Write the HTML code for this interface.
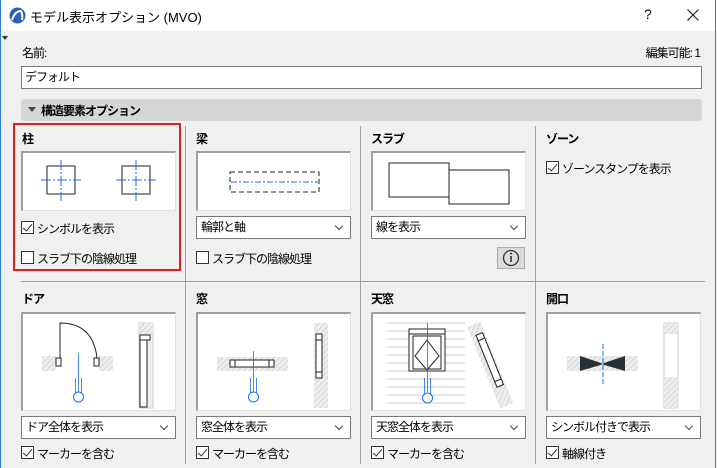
<!DOCTYPE html><html><head><meta charset="utf-8"><style>
*{box-sizing:border-box;margin:0;padding:0}
body{width:717px;height:468px;overflow:hidden;background:#f0f0f0;font-family:"Liberation Sans","Noto Sans CJK JP",sans-serif;font-size:12px;color:#000;position:relative;letter-spacing:-1px}
.a{position:absolute}
.tb{left:0;top:0;width:717px;height:31px;background:#fff}
.bd{border-left:1px solid #2b7fd8;border-right:1px solid #2b7fd8;left:0;top:0;width:716px;height:468px;pointer-events:none}
.inp{background:#fff;border:1px solid #7a7a7a}
.pv{background:#fff;border-top:2px solid #a0a0a0;border-left:2px solid #a0a0a0;border-right:1px solid #e3e3e3;border-bottom:1px solid #e3e3e3}
.dd{background:#fff;border:1px solid #7a7a7a;height:23px;padding-left:4px;line-height:21px;font-size:12px}
.dd:after{content:"";position:absolute;right:8px;top:6px;width:5px;height:5px;border-right:1px solid #444;border-bottom:1px solid #444;transform:rotate(45deg)}
.cb{width:13px;height:13px;border:1px solid #333;background:#fff}
.cb.on:after{content:"";position:absolute;left:3px;top:0px;width:4px;height:8px;border-right:1.5px solid #333;border-bottom:1.5px solid #333;transform:rotate(40deg)}
.t{font-weight:bold;font-size:12px}
.vl{width:1px;background:#a0a0a0}
</style></head><body>
<div class="a tb"></div>
<svg class="a" style="left:9px;top:7px" width="17" height="17"><circle cx="8.5" cy="8.5" r="8" fill="#2a62b8"/><path d="M3 13 Q6 4 12 4 Q14 8 13 13" stroke="#fff" stroke-width="2" fill="none"/></svg>
<div class="a" style="left:30px;top:7px;font-size:13px;letter-spacing:0">モデル表示オプション (MVO)</div>
<div class="a" style="left:644px;top:6px;font-size:14px">?</div>
<svg class="a" style="left:687px;top:9px" width="12" height="12"><path d="M0.5 0.5L11.5 11.5M11.5 0.5L0.5 11.5" stroke="#111" stroke-width="1"/></svg>
<div class="a" style="left:2px;top:36px;width:0;height:0;border-left:3px solid transparent;border-right:3px solid transparent;border-top:4px solid #333"></div>
<div class="a" style="left:22px;top:44px">名前:</div>
<div class="a" style="right:17px;top:44px">編集可能: 1</div>
<div class="a inp" style="left:21px;top:66px;width:681px;height:23px;padding-left:3px;line-height:21px">デフォルト</div>
<div class="a" style="left:21px;top:99px;width:681px;height:22px;background:#d6d6d6;border-radius:3px"></div>
<div class="a" style="left:28px;top:107px;border-left:4px solid transparent;border-right:4px solid transparent;border-top:5px solid #444"></div>
<div class="a t" style="left:41px;top:102px">構造要素オプション</div>
<div class="a vl" style="left:185px;top:126px;height:156px"></div>
<div class="a vl" style="left:360px;top:126px;height:156px"></div>
<div class="a vl" style="left:535px;top:126px;height:156px"></div>
<div class="a" style="left:21px;top:281px;width:684px;height:1px;background:#a0a0a0"></div>
<div class="a vl" style="left:185px;top:282px;height:182px"></div>
<div class="a vl" style="left:360px;top:282px;height:182px"></div>
<div class="a vl" style="left:535px;top:282px;height:182px"></div>
<div class="a" style="left:13px;top:123px;width:168px;height:148px;border:2px solid #e02020"></div>
<!-- row 1 -->
<div class="a t" style="left:22px;top:130px">柱</div>
<div class="a pv" style="left:21px;top:151px;width:155px;height:60px"><svg width="152" height="57"><g fill="none" stroke="#222"><rect x="24" y="13" width="28" height="28"/><rect x="99" y="13" width="28" height="28"/></g><g stroke="#1a6cf0" stroke-dasharray="10,2,2,2"><path d="M38 7V48M18 27H58M113 7V48M93 27H133"/></g></svg></div>
<div class="a cb on" style="left:21px;top:221px"></div><div class="a" style="left:37px;top:220px">シンボルを表示</div>
<div class="a cb" style="left:21px;top:251px"></div><div class="a" style="left:37px;top:250px">スラブ下の陰線処理</div>

<div class="a t" style="left:196px;top:130px">梁</div>
<div class="a pv" style="left:196px;top:151px;width:155px;height:60px"><svg width="152" height="57"><rect x="32" y="19" width="89" height="20" fill="none" stroke="#222" stroke-dasharray="5,3"/><path d="M33 29H120" stroke="#1a6cf0" stroke-dasharray="6,2,2,2"/></svg></div>
<div class="a dd" style="left:196px;top:216px;width:155px">輪郭と軸</div>
<div class="a cb" style="left:196px;top:251px"></div><div class="a" style="left:212px;top:250px">スラブ下の陰線処理</div>

<div class="a t" style="left:371px;top:130px">スラブ</div>
<div class="a pv" style="left:371px;top:151px;width:155px;height:60px"><svg width="152" height="57"><g fill="none" stroke="#222"><rect x="16" y="10" width="60" height="34"/><rect x="76" y="17" width="60" height="34"/></g></svg></div>
<div class="a dd" style="left:371px;top:216px;width:155px">線を表示</div>
<div class="a" style="left:497px;top:247px;width:28px;height:22px;background:#dcdcdc;border:1px solid #adadad"><svg width="26" height="20"><circle cx="13" cy="10" r="7.5" fill="none" stroke="#333" stroke-width="1.3"/><path d="M13 8V14" stroke="#333" stroke-width="1.6"/><circle cx="13" cy="5.5" r="1" fill="#333"/></svg></div>

<div class="a t" style="left:546px;top:130px">ゾーン</div>
<div class="a cb on" style="left:546px;top:161px"></div><div class="a" style="left:562px;top:160px">ゾーンスタンプを表示</div>
<!-- row 2 -->
<svg width="0" height="0" class="a"><defs><pattern id="h" width="4" height="4" patternUnits="userSpaceOnUse" patternTransform="rotate(45)"><rect width="4" height="4" fill="#eee"/><path d="M0 0V4" stroke="#ccc" stroke-width="1.5"/></pattern></defs></svg>
<div class="a t" style="left:22px;top:290px">ドア</div>
<div class="a pv" style="left:21px;top:312px;width:155px;height:99px"><svg width="152" height="96"><rect x="19" y="42" width="14" height="15" fill="url(#h)"/><rect x="76" y="42" width="14" height="15" fill="url(#h)"/><g fill="#fff" stroke="#222"><rect x="33" y="44" width="5" height="8"/><rect x="71" y="44" width="5" height="8"/></g><path d="M37 44V9Q70 9 74 44" fill="none" stroke="#222"/><path d="M55.5 39V78M52.5 64V80M58.5 64V80" stroke="#1a6cf0" stroke-width="0.8"/><circle cx="55.5" cy="83" r="5" fill="#fff" stroke="#1a6cf0"/><rect x="116" y="9" width="14" height="85" fill="#eee" stroke="#ccc"/><rect x="116" y="9" width="14" height="11" fill="url(#h)"/><g fill="#fff" stroke="#222"><rect x="117" y="21" width="7" height="72"/><rect x="117" y="21" width="10" height="5"/></g></svg></div>
<div class="a dd" style="left:21px;top:416px;width:155px">ドア全体を表示</div>
<div class="a cb on" style="left:21px;top:446px"></div><div class="a" style="left:37px;top:445px">マーカーを含む</div>

<div class="a t" style="left:196px;top:290px">窓</div>
<div class="a pv" style="left:196px;top:312px;width:155px;height:99px"><svg width="152" height="96"><rect x="19" y="43" width="71" height="14" fill="url(#h)"/><g fill="#fff" stroke="#222"><rect x="32" y="46" width="44" height="7"/><path d="M37 46V53M71 46V53"/></g><path d="M55.5 37V78M52.5 64V80M58.5 64V80" stroke="#1a6cf0" stroke-width="0.8"/><circle cx="55.5" cy="83" r="5" fill="#fff" stroke="#1a6cf0"/><rect x="116" y="9" width="14" height="85" fill="url(#h)"/><g fill="#fff" stroke="#222"><rect x="118" y="20" width="6" height="44"/><path d="M118 26H124M118 58H124"/></g></svg></div>
<div class="a dd" style="left:196px;top:416px;width:155px">窓全体を表示</div>
<div class="a cb on" style="left:196px;top:446px"></div><div class="a" style="left:212px;top:445px">マーカーを含む</div>

<div class="a t" style="left:371px;top:290px">天窓</div>
<div class="a pv" style="left:371px;top:312px;width:155px;height:99px"><svg width="152" height="96"><g stroke="#ccc"><path d="M14 9H92M14 17H92M14 25H92M14 33H92M14 41H92M14 49H92M14 57H92M14 65H92M14 73H92M14 81H92M14 89H92"/></g><g fill="#fff" stroke="#222"><rect x="36" y="15" width="36" height="42"/><rect x="40" y="22" width="28" height="33"/><path d="M54 26L66 42L54 56L42 42Z"/><path d="M36 20H72"/></g><path d="M54.5 9V78M51.5 64V80M57.5 64V80" stroke="#1a6cf0" stroke-width="0.8"/><circle cx="54.5" cy="84" r="5" fill="#fff" stroke="#1a6cf0"/><g transform="rotate(-22 120 50)"><rect x="110" y="6" width="14" height="88" fill="url(#h)"/><g fill="#fff" stroke="#222"><rect x="115" y="17" width="7" height="56"/><path d="M115 23H122M115 67H122"/></g></g></svg></div>
<div class="a dd" style="left:371px;top:416px;width:155px">天窓全体を表示</div>
<div class="a cb on" style="left:371px;top:446px"></div><div class="a" style="left:387px;top:445px">マーカーを含む</div>

<div class="a t" style="left:546px;top:290px">開口</div>
<div class="a pv" style="left:546px;top:312px;width:155px;height:99px"><svg width="152" height="96"><rect x="19" y="42" width="71" height="15" fill="url(#h)"/><path d="M32 42L56 50L32 57ZM77 42L53 50L77 57Z" fill="#263036"/><path d="M55 30V70" stroke="#1a6cf0" stroke-dasharray="5,2"/><rect x="116" y="9" width="14" height="85" fill="#fff" stroke="#ccc"/><rect x="116" y="9" width="14" height="11" fill="url(#h)"/><rect x="116" y="63" width="14" height="31" fill="url(#h)"/></svg></div>
<div class="a dd" style="left:546px;top:416px;width:155px">シンボル付きで表示</div>
<div class="a cb on" style="left:546px;top:446px"></div><div class="a" style="left:562px;top:445px">軸線付き</div>
<div class="a bd"></div>
</body></html>
